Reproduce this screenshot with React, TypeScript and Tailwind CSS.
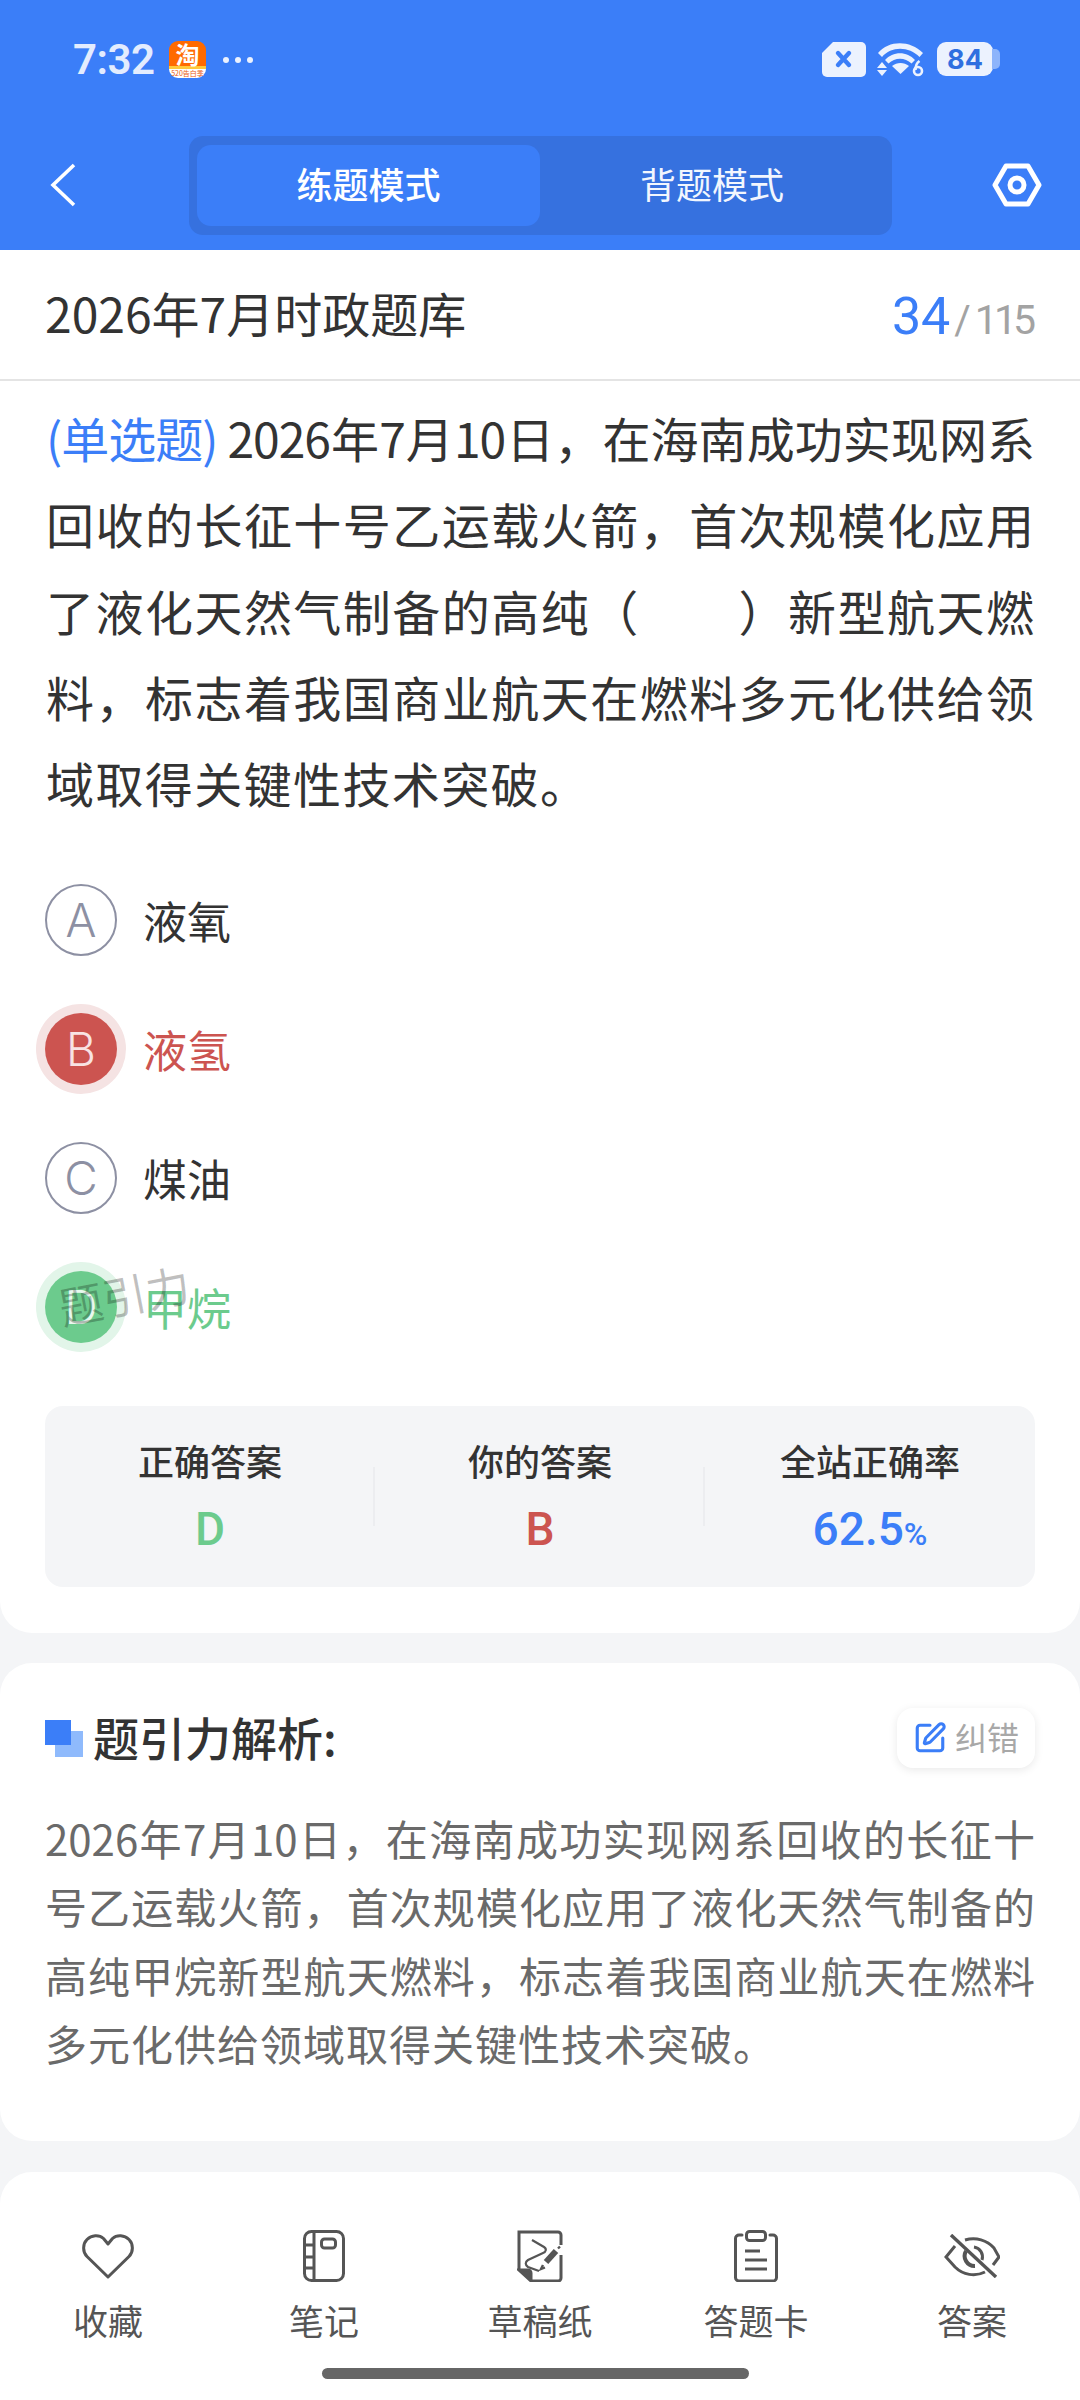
import { SquarePen } from "lucide-react";

const CJK = "font-['Noto_Sans_CJK_SC','Noto_Sans',sans-serif]";

const questionLines = [
  "2026年7月10日，在海南成功实现网系",
  "回收的长征十号乙运载火箭，首次规模化应用",
  "了液化天然气制备的高纯（　　）新型航天燃",
  "料，标志着我国商业航天在燃料多元化供给领",
];

const analysisLines = [
  "2026年7月10日，在海南成功实现网系回收的长征十",
  "号乙运载火箭，首次规模化应用了液化天然气制备的",
  "高纯甲烷新型航天燃料，标志着我国商业航天在燃料",
];

const HeartIcon = () => (
  <svg width="52" height="46" viewBox="0 0 52 46" fill="none" stroke="#555" strokeWidth="3" strokeLinejoin="round">
    <path d="M26 44L5 23.500C0.500 19 0.500 11 5 6.500 9.500 2 17 1.500 21.500 5.500L26 11l4.500-5.500C35 1.500 42.500 2 47 6.500c4.500 4.500 4.500 12.500 0 17z" />
  </svg>
);

const NoteIcon = () => (
  <svg width="42" height="52" viewBox="0 0 42 52" fill="none" stroke="#555" strokeWidth="3">
    <rect x="1.500" y="1.500" width="39" height="49" rx="7" />
    <path d="M11 2v48M2 15h9M2 27h9M2 38h9" />
    <rect x="18.500" y="9" width="14" height="9" rx="3" />
  </svg>
);

const DraftIcon = () => (
  <svg width="46" height="52" viewBox="0 0 46 52" fill="none" stroke="#555" strokeWidth="3">
    <path d="M2 40V2h39a3 3 0 0 1 3 3v10M44 25v23a3 3 0 0 1-3 3H14" />
    <path d="M2 40h9a3 3 0 0 1 3 3v8z" fill="#555" />
    <path d="M15 10l12 7c3 2 2 5-1 6L11 30c-3 2-3 5 0 7l11 4" strokeWidth="2.200" />
    <path d="M39 21L29 32" strokeWidth="6" />
    <path d="M26 35l-2 4 4-1.500M41 18.500l2-2" strokeWidth="2.400" />
  </svg>
);

const CardIcon = () => (
  <svg width="44" height="52" viewBox="0 0 44 52" fill="none" stroke="#555" strokeWidth="3" strokeLinecap="round">
    <path d="M8 5H5a3.500 3.500 0 0 0-3.500 3.500v39A3.500 3.500 0 0 0 5 51h34a3.500 3.500 0 0 0 3.500-3.500v-39A3.500 3.500 0 0 0 39 5h-3" />
    <rect x="12.500" y="1.500" width="19" height="9" rx="3" />
    <path d="M11 21h15M11 30h22M11 39h22" strokeWidth="3.200" strokeLinecap="butt" />
  </svg>
);

const EyeOffIcon = () => (
  <svg width="56" height="44" viewBox="0 0 56 44" fill="none" stroke="#555" strokeWidth="3">
    <path d="M11 12L2 23l9 10c8 8 20 10 30 5" />
    <path d="M21 6c11-3 22 0 29 8l5 9-6 8" />
    <path d="M22 17a10 10 0 0 0 9 15" strokeWidth="4" />
    <path d="M30 13a10 10 0 0 1 8 13" strokeWidth="3" />
    <path d="M7 1l45 42" strokeWidth="3.400" />
  </svg>
);

const toolbar = [
  { label: "收藏", icon: <HeartIcon /> },
  { label: "笔记", icon: <NoteIcon /> },
  { label: "草稿纸", icon: <DraftIcon /> },
  { label: "答题卡", icon: <CardIcon /> },
  { label: "答案", icon: <EyeOffIcon /> },
];

const StatusIcons = () => (
  <div className="flex items-center">
    <svg width="44" height="35" viewBox="0 0 44 35" className="mr-[11px]">
      <path d="M11 0h28a5 5 0 0 1 5 5v25a5 5 0 0 1-5 5H5a5 5 0 0 1-5-5V11z" fill="#ecf2fe" />
      <path d="M16 11l11 12M27 11L16 23" stroke="#3b7ef8" strokeWidth="4.400" strokeLinecap="round" />
    </svg>
    <svg width="47" height="36" viewBox="0 0 47 36" fill="#ecf2fe" className="mr-[13px]">
      <path d="M1 12C12 -1 33 -1 46 12l-3.500 4C32 5 14 5 5 16z" />
      <path d="M8 19c8-9 22-9 30 0l-3.500 3.500C28 16 18 16 11.500 22.500z" />
      <path d="M15 25c5-4 12-4 17 0l-8.500 8z" />
      <path d="M5 21l5 6H0zM0 29h10l-5 6z" />
      <circle cx="41" cy="30" r="4" fill="none" stroke="#ecf2fe" strokeWidth="2.600" />
      <path d="M38.500 29c0-4 1-7 4-9" fill="none" stroke="#ecf2fe" strokeWidth="2.600" />
    </svg>
    <div className="flex items-center">
      <div className="w-[56px] h-[34px] rounded-[9px] bg-[#ecf2fe] flex items-center justify-center font-['Inter',sans-serif] font-bold text-[27px] leading-none text-[#2f6fe0]">
        84
      </div>
      <div className="w-[8px] h-[20px] -ml-[1px] rounded-r-[5px] bg-[#8db4fb]" />
    </div>
  </div>
);

const TaobaoIcon = () => (
  <div className="w-[37px] h-[37px] flex flex-col">
    <div className={`h-[28px] rounded-t-[9px] bg-[#ff6a00] border-b-[3px] border-[#ffc93c] flex items-center justify-center text-white text-[24px] font-bold leading-none ${CJK}`}>
      淘
    </div>
    <div className={`flex-1 rounded-b-[9px] bg-white flex items-center justify-center text-[#e8590c] text-[7px] leading-none ${CJK}`}>520告白季</div>
  </div>
);

const Option = ({ letter, text, state }: { letter: string; text: string; state?: "wrong" | "right" }) => {
  const circle =
    state === "wrong"
      ? "bg-[#cc5450] text-[#f8e3e3] shadow-[0_0_0_9px_#f5e3e3]"
      : state === "right"
        ? "bg-[#6ccb8d] text-[#e8f8ee] shadow-[0_0_0_9px_#e2f5e9]"
        : "border-2 border-[#8d90a3] text-[#8d90a3]";
  const label = state === "wrong" ? "text-[#cc5450]" : state === "right" ? "text-[#6ccb8d]" : "text-[#333]";
  return (
    <div className="flex items-center h-[72px]">
      <div className={`w-[72px] h-[72px] rounded-full flex items-center justify-center font-['Inter',sans-serif] font-light text-[46px] leading-none ${circle}`}>
        {letter}
      </div>
      <span className={`ml-[26px] text-[44px] leading-none ${label}`}>{text}</span>
    </div>
  );
};

export default function App() {
  return (
    <div className={`relative w-[1080px] h-[2400px] overflow-hidden bg-[#f4f5f7] flex flex-col ${CJK}`}>
      {/* header */}
      <header className="h-[250px] shrink-0 bg-[#3b7ef8] flex flex-col">
        <div className="h-[136px] shrink-0 pt-[41px] pl-[73px] pr-[80px] flex items-start justify-between">
          <div className="flex items-center">
            <span className="font-['Roboto',sans-serif] font-semibold text-[42px] leading-[37px] tracking-[-0.5px] text-[#e3ecfe] w-[96px]">7:32</span>
            <TaobaoIcon />
            <div className="flex gap-[6px] ml-[17px]">
              <span className="w-[6px] h-[6px] rounded-full bg-[#ecf2fe]" />
              <span className="w-[6px] h-[6px] rounded-full bg-[#ecf2fe]" />
              <span className="w-[6px] h-[6px] rounded-full bg-[#ecf2fe]" />
            </div>
          </div>
          <StatusIcons />
        </div>
        <div className="flex items-start pl-[50px] pr-[38px]">
          <svg width="26" height="44" viewBox="0 0 26 44" fill="none" stroke="#fff" strokeWidth="3.600" className="mt-[27px]">
            <path d="M24 2L3 22l21 20" />
          </svg>
          <div className="w-[703px] h-[99px] ml-[113px] rounded-[14px] bg-[#3671df] flex pl-[8px] pt-[9px]">
            <div className="w-[343px] h-[81px] pb-[5px] rounded-[14px] bg-[#3b7ef8] flex items-center justify-center text-white text-[36px] font-medium leading-none">
              练题模式
            </div>
            <div className="w-[344px] h-[81px] pb-[5px] flex items-center justify-center text-[#f2f6fe] text-[36px] leading-none">
              背题模式
            </div>
          </div>
          <svg width="50" height="44" viewBox="0 0 50 44" fill="none" stroke="#fff" strokeWidth="5" strokeLinejoin="round" className="mt-[27px] ml-auto">
            <path d="M14 3h22l11 19-11 19H14L3 22z" />
            <circle cx="25" cy="22" r="7" />
          </svg>
        </div>
      </header>

      {/* question card */}
      <section className="h-[1383px] shrink-0 bg-white rounded-b-[32px]">
        <div className="h-[131px] border-b-2 border-[#e4e4e4] px-[45px] flex items-center justify-between">
          <h1 className="mb-[5px] text-[48px] font-normal leading-none text-[#333]">2026年7月时政题库</h1>
          <div className="mt-[5px] mr-[3px] flex items-baseline font-['Roboto',sans-serif]">
            <span className="text-[52px] leading-none text-[#3b7ef8]">34</span>
            <span className="text-[40px] leading-none text-[#a3a3a3] ml-[4px]">/</span>
            <span className="text-[41px] leading-none text-[#a3a3a3] ml-[4px] tracking-[-4px]">115</span>
          </div>
        </div>

        <div className="px-[46px] pt-[13px] text-[48px] leading-[86.300px] text-[#333]">
          {questionLines.map((line, i) => (
            <div key={i} className="flex">
              {i === 0 && <span className="text-[#3b7ef8] mr-[10px] shrink-0 tracking-[-1px]">(单选题)</span>}
              <span className={`flex-1 [text-align:justify] [text-align-last:justify] ${i === 0 ? "tracking-[-1px]" : ""}`}>{line}</span>
            </div>
          ))}
          <div className="tracking-[1.400px]">域取得关键性技术突破。</div>
        </div>

        <div className="relative px-[45px] pt-[59px] flex flex-col gap-[57px]">
          <Option letter="A" text="液氧" />
          <Option letter="B" text="液氢" state="wrong" />
          <Option letter="C" text="煤油" />
          <Option letter="D" text="甲烷" state="right" />
          {/* watermark */}
          <div className="absolute left-[58px] top-[447px] -rotate-[11deg] text-[44px] leading-none text-black/25">
            题引力
          </div>
        </div>

        <div className="mx-[45px] mt-[63px] h-[181px] rounded-[18px] bg-[#f4f5f7] grid grid-cols-3">
          {[
            { label: "正确答案", value: "D", color: "text-[#6ccb8d]" },
            { label: "你的答案", value: "B", color: "text-[#cc5450]" },
            { label: "全站正确率", value: "62.5", color: "text-[#3b7ef8]" },
          ].map((stat, i) => (
            <div key={stat.label} className="relative flex flex-col items-center pt-[34px]">
              {i > 0 && <span className="absolute -left-[2px] top-[61px] h-[59px] w-[2px] bg-[#ecedf0]" />}
              <span className="text-[36px] leading-[40px] font-medium text-[#333]">{stat.label}</span>
              <span className={`mt-[26px] font-['Roboto',sans-serif] font-medium text-[46px] leading-[46px] ${stat.color}`}>
                {stat.value}
                {i === 2 && <span className="text-[32px]">%</span>}
              </span>
            </div>
          ))}
        </div>
      </section>

      {/* analysis card */}
      <section className="mt-[30px] h-[478px] shrink-0 bg-white rounded-[32px] px-[45px] pt-[45px]">
        <div className="flex items-center justify-between h-[60px]">
          <div className="flex items-center">
            <div className="relative w-[38px] h-[37px] mr-[10px]">
              <span className="absolute right-0 bottom-0 w-[28px] h-[26px] bg-[#8fbafc]" />
              <span className="absolute left-0 top-0 w-[26px] h-[25px] bg-[#3b7ef8]" />
            </div>
            <h2 className="mb-[5px] text-[46px] font-medium leading-none text-[#333]">题引力解析:</h2>
          </div>
          <div className="w-[138px] h-[60px] rounded-[16px] bg-white shadow-[0_2px_10px_rgba(0,0,0,0.09)] flex items-center justify-center gap-[8px] text-[32px] text-[#a8a8a8] leading-none">
            <SquarePen size={34} strokeWidth={2.2} color="#3b7ef8" />
            <span className="mb-[4px]">纠错</span>
          </div>
        </div>
        <div className="mt-[36px] text-[42px] leading-[68.300px] text-[#6a6a6a]">
          {analysisLines.map((line) => (
            <div key={line} className="[text-align:justify] [text-align-last:justify]">{line}</div>
          ))}
          <div className="tracking-[1px]">多元化供给领域取得关键性技术突破。</div>
        </div>
      </section>

      {/* bottom toolbar */}
      <nav className="relative mt-[31px] flex-1 bg-white rounded-t-[32px] grid grid-cols-5 pt-[56px] items-start">
        {toolbar.map((item) => (
          <div key={item.label} className="flex flex-col items-center">
            <div className="h-[56px] flex items-center justify-center">{item.icon}</div>
            <span className="mt-[16px] text-[35px] leading-[40px] text-[#555]">{item.label}</span>
          </div>
        ))}
        <div className="absolute left-[322px] bottom-[21px] w-[427px] h-[11px] rounded-full bg-[#666]" />
      </nav>
    </div>
  );
}
